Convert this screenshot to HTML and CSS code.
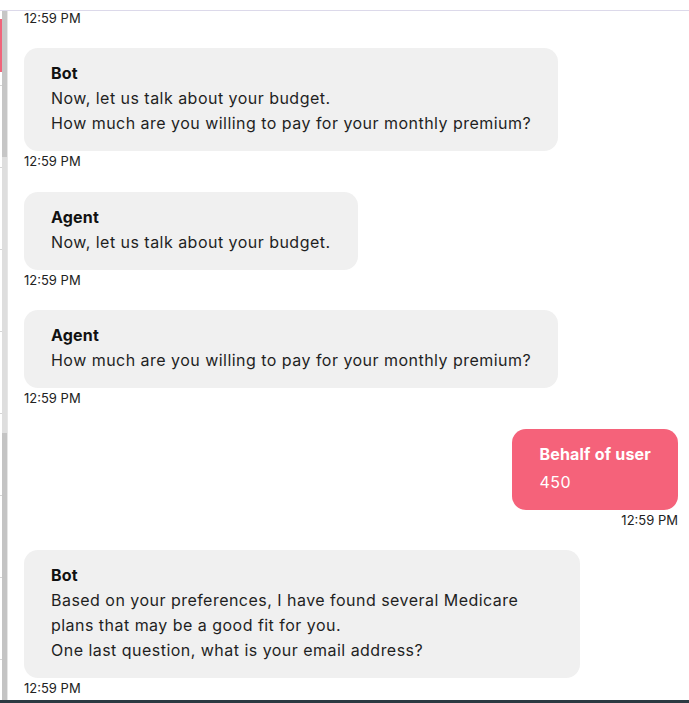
FILE: index.html
```html
<!DOCTYPE html>
<html>
<head>
<meta charset="utf-8">
<link rel="stylesheet" href="styles.css">
</head>
<body>
<div class="top-space"></div>
<div class="frame">
  <div class="side">
    <div class="side-list"><div class="side-active"></div></div>
    <div class="scrollbar">
      <div class="sb-a"></div>
      <div class="sb-b"></div>
      <div class="sb-c"></div>
    </div>
  </div>
  <div class="chat">
    <div class="stamp first">12:59 PM</div>

    <div class="msg">
      <div class="bubble bot">
        <div class="name">Bot</div>
        <div class="text">Now, let us talk about your budget.<br>How much are you willing to pay for your monthly premium?</div>
      </div>
      <div class="stamp">12:59 PM</div>
    </div>

    <div class="msg">
      <div class="bubble bot">
        <div class="name">Agent</div>
        <div class="text">Now, let us talk about your budget.</div>
      </div>
      <div class="stamp">12:59 PM</div>
    </div>

    <div class="msg">
      <div class="bubble bot">
        <div class="name">Agent</div>
        <div class="text">How much are you willing to pay for your monthly premium?</div>
      </div>
      <div class="stamp">12:59 PM</div>
    </div>

    <div class="msg user">
      <div class="bubble me">
        <div class="name">Behalf of user</div>
        <div class="text me-text">450</div>
      </div>
      <div class="stamp">12:59 PM</div>
    </div>

    <div class="msg">
      <div class="bubble bot wide">
        <div class="name">Bot</div>
        <div class="text">Based on your preferences, I have found several Medicare plans that may be a good fit for you.<br>One last question, what is your email address?</div>
      </div>
      <div class="stamp">12:59 PM</div>
    </div>
  </div>
</div>
<div class="bottom-bar"></div>
</body>
</html>
```

FILE: styles.css
```css
html, body {
  margin: 0;
  padding: 0;
  background: #ffffff;
  font-family: Inter, "Liberation Sans", sans-serif;
  color: #1f1f1f;
  height: 703px;
  overflow: hidden;
}

.top-space {
  height: 10px;
  border-bottom: 1px solid #dcd9ea;
}

.frame {
  display: flex;
  height: 689px;
  overflow: hidden;
}

.side {
  width: 7px;
  display: flex;
  border-right: 1px solid #e6e6e6;
  flex-shrink: 0;
}

.side-list {
  width: 2px;
  position: relative;
  background: repeating-linear-gradient(to bottom, transparent 0, transparent 74px, #d6d6d6 74px, #d6d6d6 75px, transparent 75px, transparent 82px);
}

.side-active {
  position: absolute;
  left: 0;
  top: 8px;
  width: 2px;
  height: 53px;
  background: #f0647a;
}

.scrollbar {
  width: 5px;
  display: flex;
  flex-direction: column;
}

.sb-a { height: 146px; background: #c6c6c6; }
.sb-b { height: 276px; background: #dedede; }
.sb-c { flex: 1; background: #c4c4c4; }

.chat {
  flex: 1;
  padding: 0 11px 0 16px;
  display: flex;
  flex-direction: column;
}

.msg {
  display: flex;
  flex-direction: column;
  align-items: flex-start;
}

.msg.user {
  align-items: flex-end;
}

.bubble {
  border-radius: 14px;
  padding: 13px 27px 15px 27px;
  max-width: 502px;
  letter-spacing: 0.47px;
}

.bot {
  background: #f0f0f0;
}

.wide {
  width: 502px;
}

.me {
  background: #f5627a;
  color: #ffffff;
}

.name {
  font-weight: 700;
  font-size: 16px;
  line-height: 25px;
  color: #111111;
  letter-spacing: 0.2px;
}

.me .name {
  color: #ffffff;
}

.text {
  font-size: 16px;
  line-height: 25px;
  color: #1f1f1f;
}

.me-text {
  color: #ffffff;
  margin-top: 3px;
}

.stamp {
  font-size: 13px;
  line-height: 20px;
  color: #222222;
  margin-bottom: 20.5px;
}

.stamp.first {
  margin-top: -3.5px;
}

.bottom-bar {
  height: 3px;
  background: #2b3a42;
}
```
